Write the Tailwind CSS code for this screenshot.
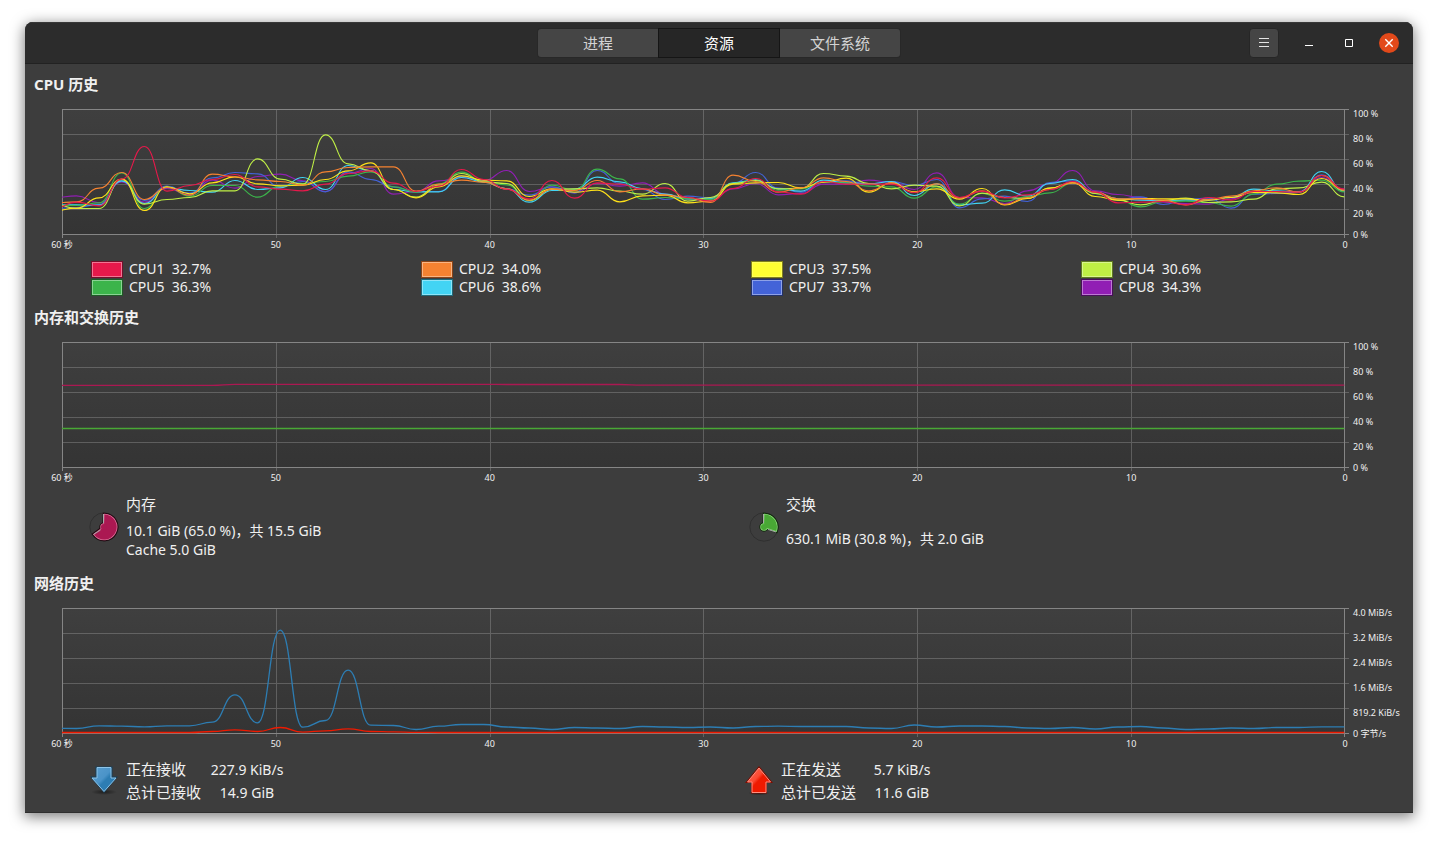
<!DOCTYPE html>
<html lang="zh-CN">
<head>
<meta charset="utf-8">
<meta name="viewport" content="width=device-width, initial-scale=1">
<title>系统监视器</title>
<script src="https://cdn.jsdelivr.net/npm/@tailwindcss/browser@4"></script>
</head>
<body class="min-h-screen bg-white px-[25px] pt-[22px] pb-7 font-['Noto_Sans','Noto_Sans_CJK_SC',sans-serif] text-sm text-[#f0f0f0]">
<div class="overflow-hidden rounded-t-lg border-b border-[#2f2f2f] bg-[#3d3d3d] shadow-[0_3px_14px_1px_rgba(0,0,0,0.5)]">
  <header class="grid h-[42px] grid-cols-[1fr_auto_1fr] items-center border-t border-b border-t-[#383838] border-b-[#222222] bg-[#2c2c2c]">
    <nav class="col-start-2 flex text-[15px] leading-5 text-[#d3d3d3]">
      <button class="h-[30px] w-[121px] rounded-l border border-r-0 border-[#282828] bg-[#454545]">进程</button>
      <button class="h-[30px] w-[122px] border border-[#151515] bg-[#262626] text-white">资源</button>
      <button class="h-[30px] w-[121px] rounded-r border border-l-0 border-[#282828] bg-[#454545]">文件系统</button>
    </nav>
    <div class="flex items-center justify-end gap-5 pr-3.5">
      <button aria-label="菜单" class="flex size-[30px] items-center justify-center rounded border border-[#262626] bg-[#454545]">
        <svg class="size-4" viewBox="0 0 16 16" stroke="#e4e4e4"><path d="M3 3.5h10M3 7.5h10M3 11.5h10"/></svg>
      </button>
      <button aria-label="最小化" class="size-5"><svg class="size-5" viewBox="0 0 20 20" stroke="#fff"><path d="M6 12.5h8"/></svg></button>
      <button aria-label="最大化" class="size-5"><svg class="size-5" viewBox="0 0 20 20" fill="none" stroke="#fff"><path d="M6.500 6.500h7v7h-7z"/></svg></button>
      <button aria-label="关闭" class="size-5 rounded-full bg-[#e2491a]"><svg class="size-5" viewBox="0 0 20 20" stroke="#fff" stroke-width="1.4"><path d="M6.300 6.300l7.400 7.400M13.700 6.300l-7.400 7.400"/></svg></button>
    </div>
  </header>

  <main>
    <section class="pt-2.5">
      <h2 class="pl-[9px] text-[15px] leading-5 font-bold">CPU 历史</h2>
      <div class="mt-[15px] flex pl-[37px]">
        <svg class="chart block h-[130px] min-w-0 flex-1" viewBox="0 0 1287 130" preserveAspectRatio="none" data-chart="cpu"></svg>
        <ul class="w-16 shrink-0 pl-1 text-[9px] leading-[10px] whitespace-nowrap">
          <li class="h-[25px]">100 %</li><li class="h-[25px]">80 %</li><li class="h-[25px]">60 %</li><li class="h-[25px]">40 %</li><li class="h-[21px]">20 %</li><li>0 %</li>
        </ul>
      </div>
      <ol class="mr-[68px] ml-[37px] flex justify-between text-[9px] leading-[10px] whitespace-nowrap">
        <li class="flex w-0 justify-center">60 秒</li><li class="flex w-0 justify-center">50</li><li class="flex w-0 justify-center">40</li><li class="flex w-0 justify-center">30</li><li class="flex w-0 justify-center">20</li><li class="flex w-0 justify-center">10</li><li class="flex w-0 justify-center">0</li>
      </ol>
      <ul class="mt-2.5 grid grid-cols-4 pr-0.5 pl-[66px] leading-[18px]">
        <li class="flex items-center gap-1.5"><span class="h-[17px] w-8 border border-[#73102a] bg-[#e6194b] inset-ring inset-ring-white/40"></span><span class="whitespace-pre">CPU1  32.7%</span></li>
        <li class="flex items-center gap-1.5"><span class="h-[17px] w-8 border border-[#8a4418] bg-[#f58231] inset-ring inset-ring-white/40"></span><span class="whitespace-pre">CPU2  34.0%</span></li>
        <li class="flex items-center gap-1.5"><span class="h-[17px] w-8 border border-[#80801a] bg-[#ffff33] inset-ring inset-ring-white/20"></span><span class="whitespace-pre">CPU3  37.5%</span></li>
        <li class="flex items-center gap-1.5"><span class="h-[17px] w-8 border border-[#5f7722] bg-[#bfef45] inset-ring inset-ring-white/40"></span><span class="whitespace-pre">CPU4  30.6%</span></li>
        <li class="flex items-center gap-1.5"><span class="h-[17px] w-8 border border-[#1e5a26] bg-[#3cb44b] inset-ring inset-ring-white/40"></span><span class="whitespace-pre">CPU5  36.3%</span></li>
        <li class="flex items-center gap-1.5"><span class="h-[17px] w-8 border border-[#216a7a] bg-[#42d4f4] inset-ring inset-ring-white/40"></span><span class="whitespace-pre">CPU6  38.6%</span></li>
        <li class="flex items-center gap-1.5"><span class="h-[17px] w-8 border border-[#22326c] bg-[#4363d8] inset-ring inset-ring-white/40"></span><span class="whitespace-pre">CPU7  33.7%</span></li>
        <li class="flex items-center gap-1.5"><span class="h-[17px] w-8 border border-[#480f5a] bg-[#911eb4] inset-ring inset-ring-white/40"></span><span class="whitespace-pre">CPU8  34.3%</span></li>
      </ul>
    </section>

    <section class="pt-[11px]">
      <h2 class="pl-[9px] text-[15px] leading-5 font-bold">内存和交换历史</h2>
      <div class="mt-[15px] flex pl-[37px]">
        <svg class="chart block h-[130px] min-w-0 flex-1" viewBox="0 0 1287 130" preserveAspectRatio="none" data-chart="mem"></svg>
        <ul class="w-16 shrink-0 pl-1 text-[9px] leading-[10px] whitespace-nowrap">
          <li class="h-[25px]">100 %</li><li class="h-[25px]">80 %</li><li class="h-[25px]">60 %</li><li class="h-[25px]">40 %</li><li class="h-[21px]">20 %</li><li>0 %</li>
        </ul>
      </div>
      <ol class="mr-[68px] ml-[37px] flex justify-between text-[9px] leading-[10px] whitespace-nowrap">
        <li class="flex w-0 justify-center">60 秒</li><li class="flex w-0 justify-center">50</li><li class="flex w-0 justify-center">40</li><li class="flex w-0 justify-center">30</li><li class="flex w-0 justify-center">20</li><li class="flex w-0 justify-center">10</li><li class="flex w-0 justify-center">0</li>
      </ol>
      <div class="mt-[11px] grid grid-cols-2 pr-1 pl-16">
        <div class="flex items-center gap-[7px]">
          <svg class="size-[30px] shrink-0" viewBox="0 0 30 30" fill="none">
            <circle cx="15" cy="15" r="14.200" stroke="#303030"/>
            <g stroke="#20070f" stroke-width="3.500"><path d="M15.500 2.500A12.500 12.500 0 1 1 5 22.300L15 15z"/><circle cx="15" cy="15" r="3"/></g>
            <g stroke="#dc6e98" stroke-width="1.500"><path d="M15.500 2.500A12.500 12.500 0 1 1 5 22.300L15 15z"/><circle cx="15" cy="15" r="3"/></g>
            <g fill="#ab1852"><path d="M15.500 2.500A12.500 12.500 0 1 1 5 22.300L15 15z"/><circle cx="15" cy="15" r="3"/></g>
            <path d="M14.500 2v9M4.500 22.500l7-4.500" stroke="#a8a8a8"/>
          </svg>
          <div>
            <h3 class="text-[15px] leading-5">内存</h3>
            <p class="mt-[7px] leading-5">10.1 GiB (65.0 %)，共 15.5 GiB</p>
            <p class="leading-[18px]">Cache 5.0 GiB</p>
          </div>
        </div>
        <div class="flex items-center gap-[7px]">
          <svg class="size-[30px] shrink-0" viewBox="0 0 30 30" fill="none">
            <circle cx="15" cy="15" r="14.200" stroke="#303030"/>
            <g stroke="#102a0b" stroke-width="3.500"><path d="M15.500 2.500A12.500 12.500 0 0 1 27.200 19L15 15z"/><circle cx="15" cy="15" r="3"/></g>
            <g stroke="#8cdd7b" stroke-width="1.500"><path d="M15.500 2.500A12.500 12.500 0 0 1 27.200 19L15 15z"/><circle cx="15" cy="15" r="3"/></g>
            <g fill="#49a835"><path d="M15.500 2.500A12.500 12.500 0 0 1 27.200 19L15 15z"/><circle cx="15" cy="15" r="3"/></g>
            <path d="M14.500 2v9M19 17.500l8 2.500" stroke="#a8a8a8"/>
          </svg>
          <div>
            <h3 class="text-[15px] leading-5">交换</h3>
            <p class="mt-[15px] mb-2.5 leading-5">630.1 MiB (30.8 %)，共 2.0 GiB</p>
          </div>
        </div>
      </div>
    </section>

    <section class="pt-3.5">
      <h2 class="pl-[9px] text-[15px] leading-5 font-bold">网络历史</h2>
      <div class="mt-[15px] flex pl-[37px]">
        <svg class="chart block h-[130px] min-w-0 flex-1" viewBox="0 0 1287 130" preserveAspectRatio="none" data-chart="net"></svg>
        <ul class="w-16 shrink-0 pl-1 text-[9px] leading-[10px] whitespace-nowrap">
          <li class="h-[25px]">4.0 MiB/s</li><li class="h-[25px]">3.2 MiB/s</li><li class="h-[25px]">2.4 MiB/s</li><li class="h-[25px]">1.6 MiB/s</li><li class="h-[21px]">819.2 KiB/s</li><li>0 字节/s</li>
        </ul>
      </div>
      <ol class="mr-[68px] ml-[37px] flex justify-between text-[9px] leading-[10px] whitespace-nowrap">
        <li class="flex w-0 justify-center">60 秒</li><li class="flex w-0 justify-center">50</li><li class="flex w-0 justify-center">40</li><li class="flex w-0 justify-center">30</li><li class="flex w-0 justify-center">20</li><li class="flex w-0 justify-center">10</li><li class="flex w-0 justify-center">0</li>
      </ol>
      <div class="mt-[9px] grid grid-cols-2 pr-3.5 pb-2 pl-16">
        <div class="flex items-center gap-[7px]">
          <svg class="size-[30px] shrink-0" viewBox="0 0 30 30">
            <defs>
              <linearGradient id="down" x1="0" y1="0" x2="1" y2="1"><stop offset="0" stop-color="#5b9fd0"/><stop offset=".45" stop-color="#4a93c8"/><stop offset=".55" stop-color="#2d7db3"/><stop offset="1" stop-color="#2d7db3"/></linearGradient>
              <radialGradient id="shade"><stop offset="0" stop-color="#000" stop-opacity=".5"/><stop offset="1" stop-color="#000" stop-opacity="0"/></radialGradient>
            </defs>
            <ellipse cx="15" cy="26" rx="13" ry="3" fill="url(#shade)"/>
            <path d="M6.500 .5h17v10h5.500L15 27 1 10.500h5.500z" fill="#17405c"/>
            <path d="M8 1.500h14v10.500h5L15 25.500 3 12h5z" fill="url(#down)" stroke="#8ec4e8"/>
          </svg>
          <table class="leading-[23px]">
            <tr><th scope="row" class="w-[84px] p-0 text-left text-[15px] font-normal">正在接收</th><td class="w-[74px] p-0 text-center whitespace-nowrap">227.9 KiB/s</td></tr>
            <tr><th scope="row" class="w-[84px] p-0 text-left text-[15px] font-normal">总计已接收</th><td class="w-[74px] p-0 text-center whitespace-nowrap">14.9 GiB</td></tr>
          </table>
        </div>
        <div class="flex items-center gap-[7px]">
          <svg class="size-[30px] shrink-0" viewBox="0 0 30 30">
            <defs><linearGradient id="up" x1="0" y1="0" x2="1" y2="1"><stop offset="0" stop-color="#ff6a55"/><stop offset=".4" stop-color="#fb4a33"/><stop offset=".5" stop-color="#ef1a00"/><stop offset="1" stop-color="#ef1a00"/></linearGradient></defs>
            <ellipse cx="15" cy="27" rx="11" ry="2.500" fill="url(#shade)"/>
            <path d="M15 0l14 17h-6v10.500H7V17H1z" fill="#7d0d00"/>
            <path d="M15 2l11.500 14H22v10.500H8V16H3.500z" fill="url(#up)" stroke="#ff8f80"/>
          </svg>
          <table class="leading-[23px]">
            <tr><th scope="row" class="w-[84px] p-0 text-left text-[15px] font-normal">正在发送</th><td class="w-[74px] p-0 text-center whitespace-nowrap">5.7 KiB/s</td></tr>
            <tr><th scope="row" class="w-[84px] p-0 text-left text-[15px] font-normal">总计已发送</th><td class="w-[74px] p-0 text-center whitespace-nowrap">11.6 GiB</td></tr>
          </table>
        </div>
      </div>
    </section>
  </main>
</div>

<script>
// Samples, oldest first, one per second. CPU values count down to the zero line in thirds of a unit.
const zero = 343;
const cpu = [
  ['#e6194b', [264,246,257,177,79,213,196,178,163,200,207,212,192,160,152,189,214,198,148,178,207,236,181,234,188,192,207,203,232,243,205,175,215,222,184,192,192,192,217,173,232,213,233,224,208,184,216,248,246,244,254,232,240,214,214,216,166,207]],
  ['#f58231', [248,245,204,157,238,202,225,162,170,179,184,195,155,142,140,140,213,192,180,186,206,240,207,211,181,215,206,225,232,247,165,184,216,203,173,184,212,189,217,191,234,212,253,232,208,188,216,236,236,240,254,238,228,212,203,216,166,210]],
  ['#ffe119', [272,264,233,177,271,200,221,188,170,191,197,195,178,152,128,208,233,200,167,180,182,229,206,216,210,245,227,225,248,243,192,188,187,203,186,174,216,188,215,206,237,205,254,235,204,187,229,240,235,236,236,240,232,217,218,223,175,210]],
  ['#bfef45', [252,265,265,178,252,238,232,212,212,116,177,192,44,131,152,208,231,195,160,185,190,241,208,206,203,213,222,190,243,232,190,181,206,204,160,168,190,206,195,198,257,219,232,235,204,188,220,240,254,241,234,247,245,237,206,203,186,230]],
  ['#3cb44b', [255,256,248,158,265,200,228,196,196,231,197,190,184,168,155,200,216,192,156,184,194,241,195,210,147,176,237,232,236,238,190,181,210,206,186,188,198,200,234,200,252,220,243,230,218,188,220,238,260,244,243,247,258,222,192,183,180,215]],
  ['#42d4f4', [254,254,255,182,250,202,211,216,181,208,203,172,208,136,152,208,215,215,172,186,206,246,211,207,171,185,206,222,236,236,188,179,206,213,180,188,191,184,226,191,254,249,209,228,190,178,218,236,240,242,240,240,232,207,212,215,154,214]],
  ['#4363d8', [265,262,253,183,241,198,219,173,157,161,200,184,215,155,178,200,214,214,168,183,206,225,200,218,151,190,208,238,228,233,190,157,204,216,184,182,192,184,196,178,263,236,228,244,187,182,216,238,230,253,238,234,264,222,220,216,164,210]],
  ['#911eb4', [233,227,248,185,246,205,224,180,204,169,162,182,214,160,145,222,214,182,172,181,151,214,200,218,190,198,188,222,238,240,206,190,224,220,192,192,180,186,208,158,232,233,250,212,190,151,212,223,232,246,250,252,236,214,214,214,172,207]]
].map(([c, v]) => [c, v.map(z => (zero - z) / 3)]);
const mem = [
  ['#ab1852', Array.from({length: 58}, (_, i) => i < 8 ? 82.200 : i < 20 ? 83.200 : i < 26 ? 83 : 82.400)],
  ['#49a835', Array(58).fill(39)]
];
const net = [
  ['#ef1a00', [1,1,1,1,1,1,1,2,3.7,2,6,1.4,2.7,4.600,2,1.6,1.2,1].concat(Array(40).fill(1))],
  ['#2d7db3', [5.3,5,7.7,7.3,6.7,7.7,7.7,11.3,38.7,10.7,103.3,6.300,13,63.300,8.300,8,4,7.3,9,9,6.5,5.5,4,6,5.5,5,7,6.5,6,6.5,5.5,7,7.3,7,7,7,5.5,5,8.500,6.5,7.5,7.5,7,5.5,5,6,4.5,6.5,7,5.5,4,4.5,5.500,5,6,6,6.700,6.700]]
];
const data = {cpu, mem, net};

const curve = values => {
  const step = 22.64, last = values.length - 1;
  const x = i => 1282.3 - (last - i) * step;
  const y = i => 125.5 - values[i];
  let d = `M${x(0)} ${y(0)}`;
  for (let i = 1; i <= last; i++) {
    const mid = x(i) - step / 2;
    d += `C${mid} ${y(i - 1)} ${mid} ${y(i)} ${x(i)} ${y(i)}`;
  }
  return d;
};

document.querySelectorAll('.chart').forEach(svg => {
  const id = svg.dataset.chart;
  const rows = [25.5, 50.5, 75.5, 100.5].map(y => `M0 ${y}H1287`).join('');
  const cols = [214.5, 428.5, 641.5, 855.5, 1069.5].map(x => `M${x} 0V129`).join('');
  const width = id === 'cpu' ? 1.1 : 1.3;
  const lines = [...data[id]].reverse().map(([c, v]) =>
    `<path d="${curve(v)}" stroke="${c}" stroke-width="${width}" vector-effect="non-scaling-stroke"/>`).join('');
  svg.innerHTML = `<defs>
      <linearGradient id="bg-${id}" x1="0" y1="0" x2="0" y2="1"><stop offset="0" stop-color="#3f3f3f"/><stop offset="1" stop-color="#343434"/></linearGradient>
      <clipPath id="clip-${id}"><rect width="1283" height="126"/></clipPath>
    </defs>
    <rect width="1283" height="126" fill="url(#bg-${id})"/>
    <g fill="none" shape-rendering="crispEdges">
      <path d="${rows}${cols}" stroke="#fff" stroke-opacity=".2" vector-effect="non-scaling-stroke"/>
      <path d="M.5 129V.5H1287M0 125.500H1287M1282.500 .5V129" stroke="#858585" vector-effect="non-scaling-stroke"/>
    </g>
    <g fill="none" clip-path="url(#clip-${id})">${lines}</g>`;
});
</script>
</body>
</html>
